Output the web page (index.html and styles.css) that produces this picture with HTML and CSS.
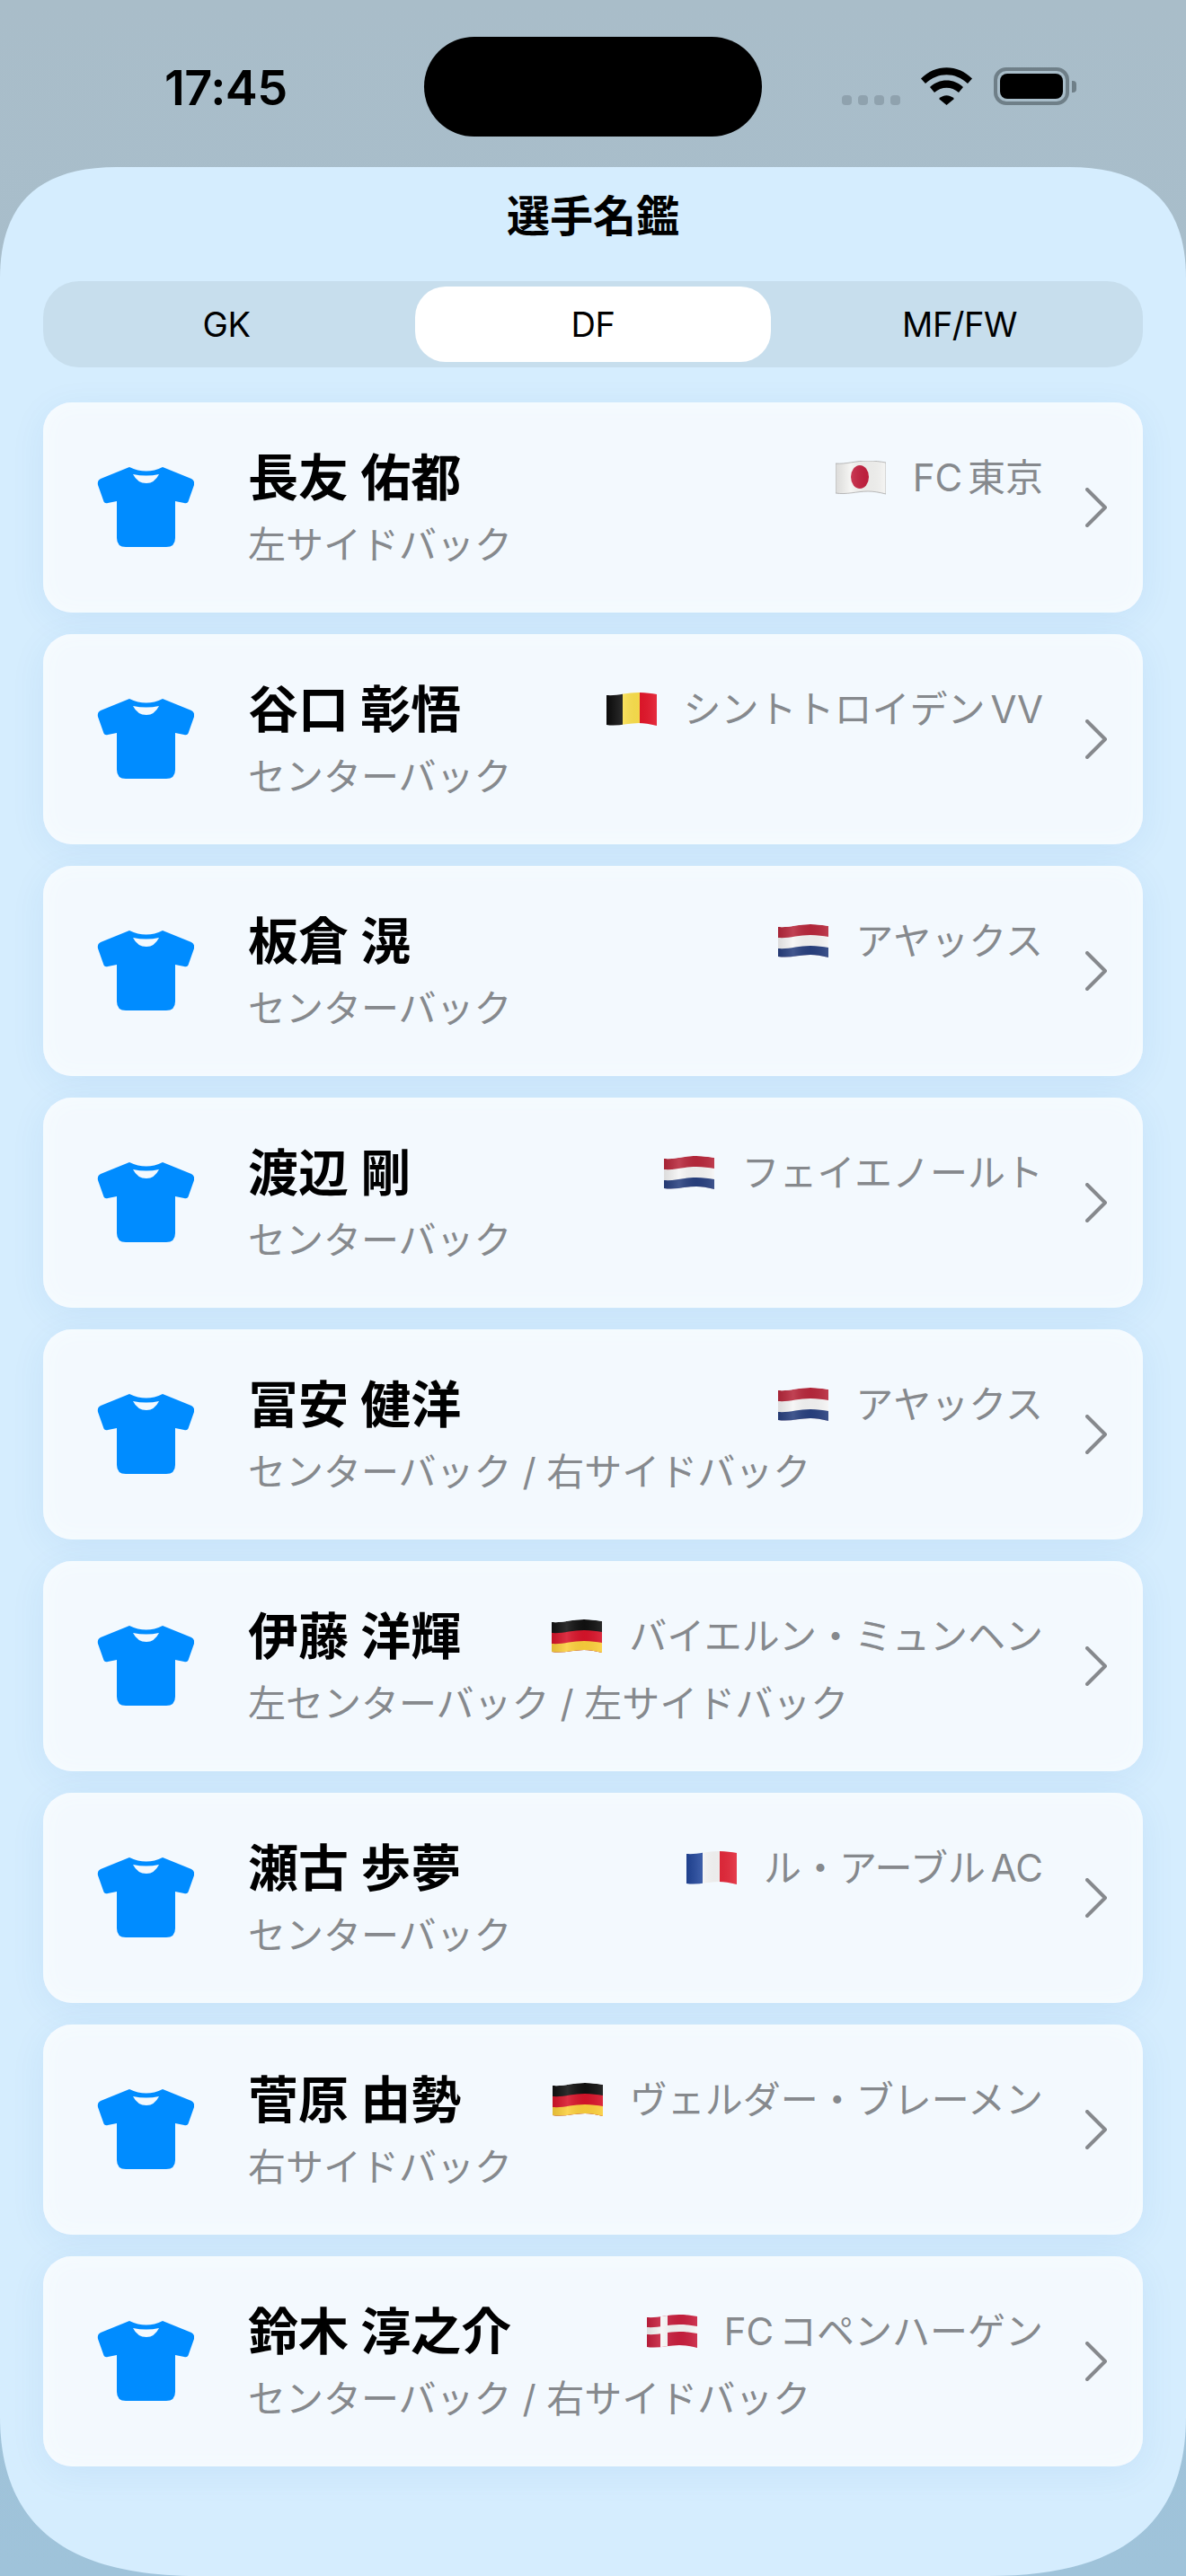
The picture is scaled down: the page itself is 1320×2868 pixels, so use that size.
FILE: index.html
```html
<!DOCTYPE html>
<html lang="ja">
<head>
    <meta charset="UTF-8">
    <meta name="viewport" content="width=device-width, initial-scale=1.0">
    <title>選手名鑑</title>
    <link rel="stylesheet" href="styles.css">
</head>
<body>
    <!-- shared icons -->
    <svg class="defs" width="0" height="0">
        <defs>
            <path id="wave" d="M0 3C12 4 22 0 36 0C44 0 50 1 56 2V37C48 35 42 34 36 34C24 34 12 38 0 36Z"/>
            <clipPath id="waveClip"><use href="#wave"/></clipPath>
            <linearGradient id="fold">
                <stop offset="0" stop-color="#000" stop-opacity=".1"/>
                <stop offset=".3" stop-color="#fff" stop-opacity=".12"/>
                <stop offset=".65" stop-color="#000" stop-opacity=".04"/>
                <stop offset="1" stop-color="#fff" stop-opacity=".1"/>
            </linearGradient>
            <symbol id="shirt" viewBox="0 0 108 90">
                <path fill-rule="evenodd" d="M36 0Q55 9 73 0L105 13Q109 15 108 20L102 37Q101 41 97 40L87 38V79Q87 89 77 89H32Q22 89 22 79V38L12 40Q8 41 7 37L1 20Q0 15 4 13ZM40 8Q55 11 69 8Q64 18 55 18Q45 18 40 8Z"/>
            </symbol>
            <symbol id="chevron" viewBox="0 0 24 44">
                <path d="M2 2L22 22L2 42" fill="none" stroke="#86898d" stroke-width="4" stroke-linecap="round" stroke-linejoin="round"/>
            </symbol>
            <symbol id="flag-jp" viewBox="0 0 56 38">
                <g clip-path="url(#waveClip)">
                    <rect width="56" height="38" fill="#f4f4f2"/>
                    <ellipse cx="27" cy="18" rx="10" ry="13" fill="#c4203f"/>
                    <rect width="56" height="38" fill="url(#fold)"/>
                </g>
                <use href="#wave" fill="none" stroke="#aaa" stroke-width=".8"/>
            </symbol>
            <symbol id="flag-be" viewBox="0 0 56 38">
                <g clip-path="url(#waveClip)">
                    <rect width="18" height="38" fill="#0c0c0c"/>
                    <rect x="18" width="19" height="38" fill="#fbe04d"/>
                    <rect x="37" width="19" height="38" fill="#e3162a"/>
                    <rect width="56" height="38" fill="url(#fold)"/>
                </g>
            </symbol>
            <symbol id="flag-nl" viewBox="0 0 56 38">
                <g clip-path="url(#waveClip)">
                    <use href="#wave" fill="#b8283c"/>
                    <use href="#wave" fill="#f5f5f5" y="12"/>
                    <use href="#wave" fill="#28407f" y="24"/>
                    <rect width="56" height="38" fill="url(#fold)"/>
                </g>
            </symbol>
            <symbol id="flag-de" viewBox="0 0 56 38">
                <g clip-path="url(#waveClip)">
                    <use href="#wave" fill="#111"/>
                    <use href="#wave" fill="#d8142a" y="12"/>
                    <use href="#wave" fill="#fbcf3c" y="24"/>
                    <rect width="56" height="38" fill="url(#fold)"/>
                </g>
            </symbol>
            <symbol id="flag-fr" viewBox="0 0 56 38">
                <g clip-path="url(#waveClip)">
                    <rect width="18" height="38" fill="#22479c"/>
                    <rect x="18" width="19" height="38" fill="#f6f6f6"/>
                    <rect x="37" width="19" height="38" fill="#e3283a"/>
                    <rect width="56" height="38" fill="url(#fold)"/>
                </g>
            </symbol>
            <symbol id="flag-dk" viewBox="0 0 56 38">
                <g clip-path="url(#waveClip)">
                    <rect width="56" height="38" fill="#c9203f"/>
                    <rect x="15" width="8" height="38" fill="#f6f6f6"/>
                    <path d="M0 14C12 15 22 11 36 11C44 11 50 12 56 13V21C50 20 44 19 36 19C22 19 12 23 0 22Z" fill="#f6f6f6"/>
                    <rect width="56" height="38" fill="url(#fold)"/>
                </g>
            </symbol>
        </defs>
    </svg>

    <header class="status-bar">
        <span class="time">17:45</span>
        <div class="island"></div>
        <div class="status-icons">
            <div class="signal"><i></i><i></i><i></i><i></i></div>
            <svg class="wifi" viewBox="0 0 57 42" width="57" height="42">
                <path d="M0 12.5C16 -4 41 -4 57 12.5L52 18C38 5 19 5 5 18Z"/>
                <path d="M10 22C20 12 37 12 47 22L42 28C34 21 23 21 15 28Z"/>
                <path d="M20 35C25 30 32 30 37 35L28.5 42Z"/>
            </svg>
            <div class="battery"><div class="battery-level"></div></div>
            <div class="battery-cap"></div>
        </div>
    </header>

    <main class="panel">
        <h1 class="title">選手名鑑</h1>

        <div class="segments">
            <div class="segment">GK</div>
            <div class="segment active">DF</div>
            <div class="segment">MF/FW</div>
        </div>

        <div class="player-list">
            <div class="player">
                <svg class="shirt"><use href="#shirt"/></svg>
                <div class="player-info">
                    <div class="player-top">
                        <span class="name">長友 佑都</span>
                        <span class="club"><svg class="flag"><use href="#flag-jp"/></svg>FC 東京</span>
                    </div>
                    <div class="position">左サイドバック</div>
                </div>
                <svg class="chevron"><use href="#chevron"/></svg>
            </div>
            <div class="player">
                <svg class="shirt"><use href="#shirt"/></svg>
                <div class="player-info">
                    <div class="player-top">
                        <span class="name">谷口 彰悟</span>
                        <span class="club"><svg class="flag"><use href="#flag-be"/></svg>シントトロイデン VV</span>
                    </div>
                    <div class="position">センターバック</div>
                </div>
                <svg class="chevron"><use href="#chevron"/></svg>
            </div>
            <div class="player">
                <svg class="shirt"><use href="#shirt"/></svg>
                <div class="player-info">
                    <div class="player-top">
                        <span class="name">板倉 滉</span>
                        <span class="club"><svg class="flag"><use href="#flag-nl"/></svg>アヤックス</span>
                    </div>
                    <div class="position">センターバック</div>
                </div>
                <svg class="chevron"><use href="#chevron"/></svg>
            </div>
            <div class="player">
                <svg class="shirt"><use href="#shirt"/></svg>
                <div class="player-info">
                    <div class="player-top">
                        <span class="name">渡辺 剛</span>
                        <span class="club"><svg class="flag"><use href="#flag-nl"/></svg>フェイエノールト</span>
                    </div>
                    <div class="position">センターバック</div>
                </div>
                <svg class="chevron"><use href="#chevron"/></svg>
            </div>
            <div class="player">
                <svg class="shirt"><use href="#shirt"/></svg>
                <div class="player-info">
                    <div class="player-top">
                        <span class="name">冨安 健洋</span>
                        <span class="club"><svg class="flag"><use href="#flag-nl"/></svg>アヤックス</span>
                    </div>
                    <div class="position">センターバック / 右サイドバック</div>
                </div>
                <svg class="chevron"><use href="#chevron"/></svg>
            </div>
            <div class="player">
                <svg class="shirt"><use href="#shirt"/></svg>
                <div class="player-info">
                    <div class="player-top">
                        <span class="name">伊藤 洋輝</span>
                        <span class="club"><svg class="flag"><use href="#flag-de"/></svg>バイエルン・ミュンヘン</span>
                    </div>
                    <div class="position">左センターバック / 左サイドバック</div>
                </div>
                <svg class="chevron"><use href="#chevron"/></svg>
            </div>
            <div class="player">
                <svg class="shirt"><use href="#shirt"/></svg>
                <div class="player-info">
                    <div class="player-top">
                        <span class="name">瀬古 歩夢</span>
                        <span class="club"><svg class="flag"><use href="#flag-fr"/></svg>ル・アーブル AC</span>
                    </div>
                    <div class="position">センターバック</div>
                </div>
                <svg class="chevron"><use href="#chevron"/></svg>
            </div>
            <div class="player">
                <svg class="shirt"><use href="#shirt"/></svg>
                <div class="player-info">
                    <div class="player-top">
                        <span class="name">菅原 由勢</span>
                        <span class="club"><svg class="flag"><use href="#flag-de"/></svg>ヴェルダー・ブレーメン</span>
                    </div>
                    <div class="position">右サイドバック</div>
                </div>
                <svg class="chevron"><use href="#chevron"/></svg>
            </div>
            <div class="player">
                <svg class="shirt"><use href="#shirt"/></svg>
                <div class="player-info">
                    <div class="player-top">
                        <span class="name">鈴木 淳之介</span>
                        <span class="club"><svg class="flag"><use href="#flag-dk"/></svg>FC コペンハーゲン</span>
                    </div>
                    <div class="position">センターバック / 右サイドバック</div>
                </div>
                <svg class="chevron"><use href="#chevron"/></svg>
            </div>
        </div>
    </main>
</body>
</html>
```

FILE: styles.css
```css
* {
    box-sizing: border-box;
}
html, body {
    height: 100%;
}
body {
    margin: 0;
    display: flex;
    flex-direction: column;
    overflow: hidden;
    font-family: Inter, "Noto Sans CJK JP", sans-serif;
    color: #000;
    background: linear-gradient(#a9bdc9, #9fc3da);
}
.defs {
    display: block;
}

/* status bar */
.status-bar {
    flex: none;
    height: 186px;
    padding: 41px 122px 0 183px;
    display: flex;
    align-items: flex-start;
}
.time {
    width: 289px;
    margin-top: 31px;
    font-size: 54px;
    line-height: 52px;
    font-weight: 600;
    letter-spacing: -0.5px;
}
.island {
    width: 376px;
    height: 111px;
    border-radius: 56px;
    background: #000;
}
.status-icons {
    flex: 1;
    height: 76px;
    padding-left: 89px;
    display: flex;
    align-items: flex-end;
}
.signal {
    display: flex;
    gap: 7px;
    margin-right: 23px;
}
.signal i {
    width: 11px;
    height: 11px;
    border-radius: 4px;
    background: #8fa2ae;
}
.wifi {
    display: block;
    margin-right: 24px;
}
.battery {
    width: 84px;
    height: 42px;
    padding: 3px;
    border: 4px solid #6f7f88;
    border-radius: 14px;
}
.battery-level {
    height: 100%;
    border-radius: 8px;
    background: #000;
}
.battery-cap {
    width: 5px;
    height: 13px;
    margin: 0 0 14px 3px;
    border-radius: 0 4px 4px 0;
    background: #6f7f88;
}

/* panel, squircle corners */
.panel {
    flex: 1;
    padding: 0 48px;
    background: #d5edfe;
    clip-path: path("M0 124C0 44 40 0 130 0H1190C1280 0 1320 44 1320 124V2504C1320 2614 1260 2682 1100 2682H220C60 2682 0 2614 0 2504Z");
}
.title {
    margin: 0;
    height: 127px;
    padding-top: 26px;
    text-align: center;
    font-size: 48px;
    line-height: 58px;
    font-weight: 600;
}
.segments {
    height: 96px;
    padding: 6px 0;
    display: grid;
    grid-template-columns: repeat(3, 1fr);
    border-radius: 40px;
    background: #c7deed;
}
.segment {
    display: flex;
    align-items: center;
    justify-content: center;
    font-size: 38px;
    font-weight: 400;
    letter-spacing: -0.5px;
    border-radius: 34px;
}
.segment.active {
    margin: 0 6px;
    background: #fff;
}

/* players */
.player-list {
    margin-top: 39px;
    display: flex;
    flex-direction: column;
    gap: 24px;
}
.player {
    height: 234px;
    padding: 0 40px 0 60px;
    display: flex;
    align-items: center;
    border-radius: 32px;
    background: #f3f9fe;
    box-shadow: 0 8px 40px rgba(0, 100, 180, 0.07), inset 0 0 24px #f7fcff;
}
.shirt {
    flex: none;
    width: 108px;
    height: 90px;
    margin-right: 60px;
    fill: #008cff;
}
.player-info {
    flex: 1;
    min-width: 0;
    padding-top: 8px;
}
.player-top {
    display: flex;
    align-items: center;
    justify-content: space-between;
    height: 60px;
    margin-bottom: 15px;
}
.name {
    font-size: 56px;
    line-height: 60px;
    font-weight: 700;
    white-space: nowrap;
}
.club {
    display: flex;
    align-items: center;
    gap: 30px;
    margin-bottom: 6px;
    font-size: 42px;
    word-spacing: -6px;
    color: #86898d;
    white-space: nowrap;
}
.flag {
    flex: none;
    width: 56px;
    height: 38px;
    margin-top: 6px;
}
.position {
    font-size: 42px;
    line-height: 60px;
    color: #86898d;
    white-space: nowrap;
}
.chevron {
    flex: none;
    width: 24px;
    height: 44px;
    margin-left: 47px;
}
```
